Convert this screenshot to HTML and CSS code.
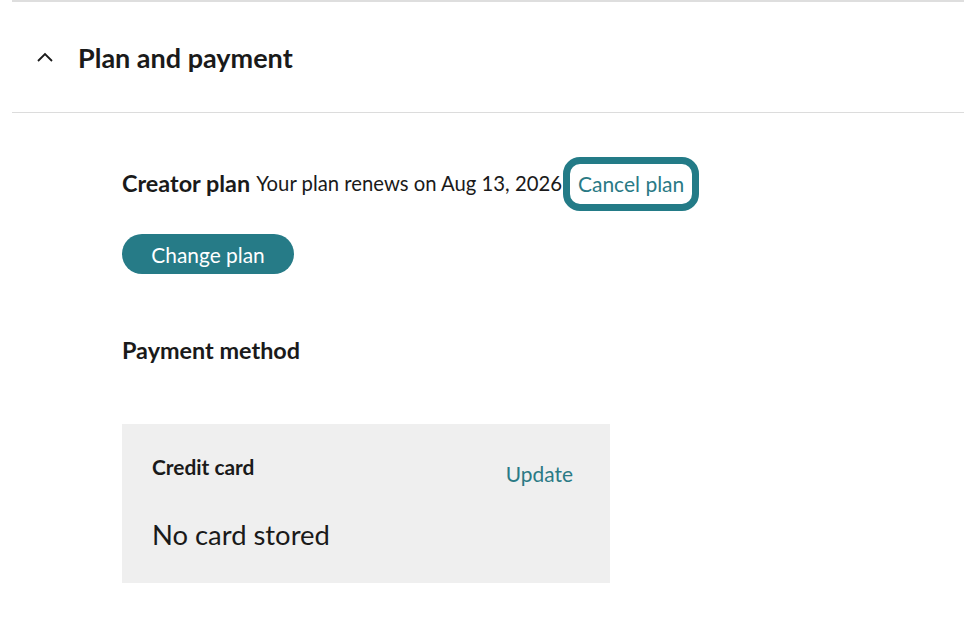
FILE: index.html
```html
<!DOCTYPE html>
<html>
<head>
<meta charset="utf-8">
<link rel="stylesheet" href="styles.css">
</head>
<body>
<div class="page">
  <section class="panel">
    <header class="panel-head">
      <svg class="chev" width="18" height="12" viewBox="0 0 18 12"><path d="M2 10 L9 3 L16 10" fill="none" stroke="#1a1a1a" stroke-width="1.8"/></svg>
      <h2 class="panel-title">Plan and payment</h2>
    </header>
    <div class="panel-body">
      <div class="plan-line">
        <span class="plan-name">Creator plan</span>
        <span class="plan-renew">Your plan renews on Aug 13, 2026</span>
        <a class="cancel-link" href="#">Cancel plan</a>
      </div>
      <button class="btn-primary">Change plan</button>
      <h3 class="sub-title">Payment method</h3>
      <div class="card">
        <div class="card-top">
          <span class="card-label">Credit card</span>
          <a class="card-update" href="#">Update</a>
        </div>
        <div class="card-value">No card stored</div>
      </div>
    </div>
  </section>
</div>
</body>
</html>
```
FILE: styles.css
```css
html, body {
  margin: 0;
  padding: 0;
  background: #fff;
  font-family: Lato, "Open Sans", sans-serif;
  color: #1a1a1a;
}
.page {
  padding-left: 12px;
}
.panel {
  border-top: 2px solid #dedede;
}
.panel-head {
  display: flex;
  align-items: center;
  height: 110px;
  border-bottom: 1px solid #dcdcdc;
  padding-left: 24px;
}
.chev {
  width: 18px;
  height: 12px;
  margin-right: 24px;
}
.panel-title {
  margin: 0;
  font-size: 27px;
  font-weight: 700;
}
.panel-body {
  padding-left: 110px;
  padding-top: 45px;
}
.plan-line {
  display: flex;
  align-items: center;
  height: 54px;
}
.plan-name {
  font-size: 23.4px;
  font-weight: 700;
  margin-right: 6px;
  margin-bottom: 4px;
}
.plan-renew {
  font-size: 20.3px;
  margin-bottom: 4px;
}
.cancel-link {
  display: inline-block;
  font-size: 21px;
  line-height: 25px;
  color: #2a7a85;
  text-decoration: none;
  border: 7px solid #237b87;
  border-radius: 17px;
  padding: 7px 8px 8px;
  margin-left: 1px;
  margin-bottom: 2px;
}
.btn-primary {
  display: block;
  margin-top: 22px;
  height: 40px;
  width: 172px;
  border: none;
  border-radius: 20px;
  background: #267b87;
  color: #fff;
  font-family: inherit;
  font-size: 20.9px;
  padding: 0;
}
.sub-title {
  margin: 62px 0 0 0;
  font-size: 23.4px;
  font-weight: 700;
  line-height: 28px;
}
.card {
  margin-top: 60px;
  width: 428px;
  height: 99px;
  background: #efefef;
  padding: 30px;
}
.card-top {
  display: flex;
  justify-content: space-between;
  padding-right: 7px;
}
.card-label {
  font-size: 20.9px;
  font-weight: 700;
  line-height: 26px;
}
.card-update {
  font-size: 20.9px;
  line-height: 26px;
  color: #2a7a85;
  text-decoration: none;
  margin-top: 7px;
}
.card-value {
  margin-top: 31px;
  font-size: 27.4px;
  line-height: 34px;
}
```
